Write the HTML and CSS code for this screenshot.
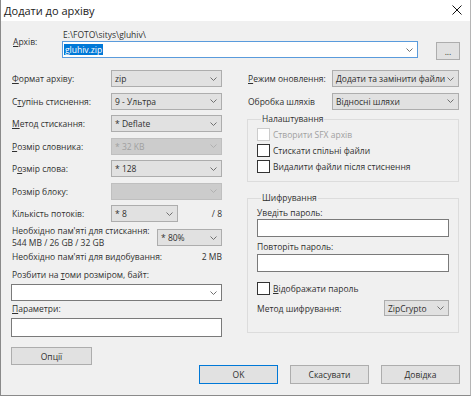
FILE: index.html
```html
<!DOCTYPE html>
<html lang="uk">

<head>
    <meta charset="UTF-8">
    <title>Додати до архіву</title>
    <link rel="stylesheet" href="styles.css">
</head>

<body>
    <div class="window">
        <div class="titlebar">
            <span class="title">Додати до архіву</span>
            <svg class="close" width="10" height="10" viewBox="0 0 10 10">
                <path d="M0.5 0.5 L9.5 9.5 M9.5 0.5 L0.5 9.5" stroke="#111" stroke-width="1" fill="none" />
            </svg>
        </div>

        <div class="dialog">
            <div class="archive">
                <span class="arc-label"><u>А</u>рхів:</span>
                <span class="arc-path">E:\FOTO\sitys\gluhiv\</span>
                <div class="combo focused">
                    <span class="selected">gluhiv.zip</span>
                    <svg class="arrow" width="7" height="4" viewBox="0 0 7 4"><polyline points="0.5,0.5 3.5,3.5 6.5,0.5" /></svg>
                </div>
                <button class="btn browse">...</button>
            </div>

            <div class="columns">
                <div class="col-left">
                    <div class="opts">
                        <span class="lbl"><u>Ф</u>ормат архіву:</span>
                        <div class="select"><span>zip</span><svg class="arrow" width="7" height="4" viewBox="0 0 7 4"><polyline points="0.5,0.5 3.5,3.5 6.5,0.5" /></svg></div>

                        <span class="lbl">С<u>т</u>упінь стиснення:</span>
                        <div class="select"><span>9 - Ультра</span><svg class="arrow" width="7" height="4" viewBox="0 0 7 4"><polyline points="0.5,0.5 3.5,3.5 6.5,0.5" /></svg></div>

                        <span class="lbl"><u>М</u>етод стискання:</span>
                        <div class="select"><span>* Deflate</span><svg class="arrow" width="7" height="4" viewBox="0 0 7 4"><polyline points="0.5,0.5 3.5,3.5 6.5,0.5" /></svg></div>

                        <span class="lbl"><u>Р</u>озмір словника:</span>
                        <div class="select disabled"><span>* 32 KB</span><svg class="arrow" width="7" height="4" viewBox="0 0 7 4"><polyline points="0.5,0.5 3.5,3.5 6.5,0.5" /></svg></div>

                        <span class="lbl">Р<u>о</u>змір слова:</span>
                        <div class="select"><span>* 128</span><svg class="arrow" width="7" height="4" viewBox="0 0 7 4"><polyline points="0.5,0.5 3.5,3.5 6.5,0.5" /></svg></div>

                        <span class="lbl">Розмір блоку:</span>
                        <div class="select disabled"><span></span><svg class="arrow" width="7" height="4" viewBox="0 0 7 4"><polyline points="0.5,0.5 3.5,3.5 6.5,0.5" /></svg></div>

                        <span class="lbl">Кількість потоків:</span>
                        <div class="threads">
                            <div class="select narrow"><span>* 8</span><svg class="arrow" width="7" height="4" viewBox="0 0 7 4"><polyline points="0.5,0.5 3.5,3.5 6.5,0.5" /></svg></div>
                            <span>/ 8</span>
                        </div>
                    </div>

                    <div class="mem">
                        <div class="mem-text">
                            <div>Необхідно пам'яті для стискання:</div>
                            <div>544 MB / 26 GB / 32 GB</div>
                        </div>
                        <div class="select"><span>* 80%</span><svg class="arrow" width="7" height="4" viewBox="0 0 7 4"><polyline points="0.5,0.5 3.5,3.5 6.5,0.5" /></svg></div>
                    </div>

                    <div class="unpack">
                        <span>Необхідно пам'яті для видобування:</span>
                        <span>2 MB</span>
                    </div>

                    <div class="split-label">Розбити на <u>т</u>оми розміром, байт:</div>
                    <div class="combo">
                        <span></span>
                        <svg class="arrow" width="7" height="4" viewBox="0 0 7 4"><polyline points="0.5,0.5 3.5,3.5 6.5,0.5" /></svg>
                    </div>

                    <div class="params-label"><u>П</u>араметри:</div>
                    <div class="textbox params"></div>

                    <button class="btn options">Опції</button>
                </div>

                <div class="col-right">
                    <div class="opts right">
                        <span class="lbl"><u>Р</u>ежим оновлення:</span>
                        <div class="select"><span>Додати та замінити файли</span><svg class="arrow" width="7" height="4" viewBox="0 0 7 4"><polyline points="0.5,0.5 3.5,3.5 6.5,0.5" /></svg></div>

                        <span class="lbl">Обробка шляхів</span>
                        <div class="select"><span>Відносні шляхи</span><svg class="arrow" width="7" height="4" viewBox="0 0 7 4"><polyline points="0.5,0.5 3.5,3.5 6.5,0.5" /></svg></div>
                    </div>

                    <fieldset class="group settings">
                        <legend>Налаштування</legend>
                        <div class="check disabled"><span class="box"></span>Створити SFX архів</div>
                        <div class="check"><span class="box"></span>Стискати спільні файли</div>
                        <div class="check"><span class="box"></span>Видалити файли після стиснення</div>
                    </fieldset>

                    <fieldset class="group crypto">
                        <legend>Шифрування</legend>
                        <div class="pw-label first">Уведіть пароль:</div>
                        <div class="textbox pw"></div>
                        <div class="pw-label">Повторіть пароль:</div>
                        <div class="textbox pw"></div>
                        <div class="check show"><span class="box"></span><u>В</u>ідображати пароль</div>
                        <div class="crypt-method">
                            <span>Метод шифрування:</span>
                            <div class="select narrow"><span>ZipCrypto</span><svg class="arrow" width="7" height="4" viewBox="0 0 7 4"><polyline points="0.5,0.5 3.5,3.5 6.5,0.5" /></svg></div>
                        </div>
                    </fieldset>
                </div>
            </div>

            <div class="footer">
                <button class="btn default">OK</button>
                <button class="btn">Скасувати</button>
                <button class="btn">Довідка</button>
            </div>
        </div>
    </div>
</body>

</html>
```

FILE: styles.css
```css
* {
    box-sizing: border-box;
}

body {
    margin: 0;
    background-color: #f0f0f0;
    font-family: "Open Sans", "Liberation Sans", sans-serif;
    font-size: 8.5px;
    color: #303030;
}

u {
    text-underline-offset: 1px;
}

.window {
    width: 471px;
    height: 396px;
    background-color: #f0f0f0;
    border-left: 1px solid #8a8a8a;
    border-right: 1px solid #b5b5b5;
    border-bottom: 1px solid #8a8a8a;
}

.titlebar {
    height: 21px;
    background-color: #fff;
    display: flex;
    align-items: center;
    justify-content: space-between;
    padding: 0 8px 1px 3px;
}

.title {
    font-size: 11px;
    color: #222;
}

.close {
    display: block;
    margin-bottom: 1px;
}

.dialog {
    padding: 8px 10px 0 10px;
}

/* archive row */
.archive {
    display: grid;
    grid-template-columns: 51px 356px 1fr 24px;
    grid-template-rows: 12px 17px;
}

.arc-label {
    grid-column: 1;
    grid-row: 1 / 3;
    padding: 7px 0 0 2px;
    line-height: 12px;
}

.arc-path {
    grid-column: 2;
    grid-row: 1;
    line-height: 12px;
    padding-left: 1px;
}

.archive .combo {
    grid-column: 2;
    grid-row: 2;
}

.browse {
    grid-column: 4;
    grid-row: 2;
    height: 19px;
    margin-top: 1px;
}

.combo,
.select,
.textbox {
    display: flex;
    align-items: center;
    justify-content: space-between;
    height: 17px;
    padding: 0 4px 0 3px;
    white-space: nowrap;
}

.combo,
.textbox {
    background-color: #fff;
    border: 1px solid #7a7a7a;
}

.combo.focused {
    border-color: #5a9bdc;
    padding-left: 1px;
}

.selected {
    background-color: #0078d7;
    color: #fff;
    padding: 0 1px;
    line-height: 11px;
}

.select {
    background-color: #e1e1e1;
    border: 1px solid #adadad;
}

.select.disabled {
    background-color: #cccccc;
    border-color: #bfbfbf;
    color: #a0a0a0;
}

.arrow {
    flex: none;
    display: block;
}

.arrow polyline {
    fill: none;
    stroke: #707070;
    stroke-width: 1;
}

.select.disabled .arrow polyline {
    stroke: #b0b0b0;
}

/* columns */
.columns {
    display: grid;
    grid-template-columns: 211px 212px;
    column-gap: 25px;
    margin-top: 12px;
}

.col-left,
.col-right {
    display: flex;
    flex-direction: column;
}

.opts {
    display: grid;
    grid-template-columns: 100px 111px;
    grid-auto-rows: 17px;
    row-gap: 5.5px;
    align-items: center;
}

.opts.right {
    grid-template-columns: 85px 127px;
}

.lbl {
    padding-left: 1px;
    white-space: nowrap;
}

.threads {
    display: flex;
    align-items: center;
    justify-content: space-between;
    height: 17px;
}

.threads .narrow {
    width: 67px;
}

.mem {
    display: grid;
    grid-template-columns: 1fr 65px;
    align-items: center;
    margin-top: 3px;
    line-height: 12px;
}

.mem-text {
    padding-left: 1px;
    white-space: nowrap;
}

.mem .select {
    margin-top: 1px;
}

.unpack {
    display: flex;
    justify-content: space-between;
    margin-top: 2px;
    line-height: 12px;
    padding-left: 1px;
}

.split-label {
    margin-top: 6px;
    line-height: 12px;
    padding-left: 1px;
}

.col-left .combo {
    margin-top: 3px;
}

.params-label {
    margin-top: 2px;
    line-height: 12px;
    padding-left: 1px;
}

.params {
    margin-top: 3px;
    height: 19px;
}

.btn {
    font-family: inherit;
    font-size: 8.5px;
    color: #303030;
    background-color: #e1e1e1;
    border: 1px solid #adadad;
    padding: 0;
    height: 18px;
}

.options {
    width: 81px;
    margin-top: 10px;
}

/* right side groups */
.group {
    border: 1px solid #dcdcdc;
    margin: 0;
    min-width: 0;
}

.group legend {
    padding: 0 1px;
    margin-left: 4px;
    line-height: 12px;
}

.settings {
    margin-top: 3.5px;
    padding: 1px 8px 7px 9px;
}

.check {
    display: flex;
    align-items: center;
    height: 16px;
    white-space: nowrap;
}

.check .box {
    width: 13px;
    height: 13px;
    background-color: #fff;
    border: 1px solid #333;
    margin-right: 3px;
    flex: none;
}

.check.disabled {
    color: #a0a0a0;
}

.check.disabled .box {
    border-color: #cccccc;
}

.crypto {
    margin-top: 10px;
    padding: 0 9px 16px 9px;
}

.pw-label {
    margin-top: 4px;
    line-height: 12px;
    margin-bottom: 1px;
}

.pw-label.first {
    margin-top: 3px;
    margin-bottom: 0;
}

.pw {
    height: 18px;
}

.show {
    margin-top: 8px;
}

.crypt-method {
    display: flex;
    align-items: center;
    justify-content: space-between;
    margin-top: 4px;
}

.crypt-method .narrow {
    width: 65px;
    height: 16px;
}

/* footer */
.footer {
    display: flex;
    justify-content: flex-end;
    gap: 12px;
}

.footer .btn {
    width: 79px;
    height: 19px;
}

.footer .default {
    border-color: #0078d7;
}
```
